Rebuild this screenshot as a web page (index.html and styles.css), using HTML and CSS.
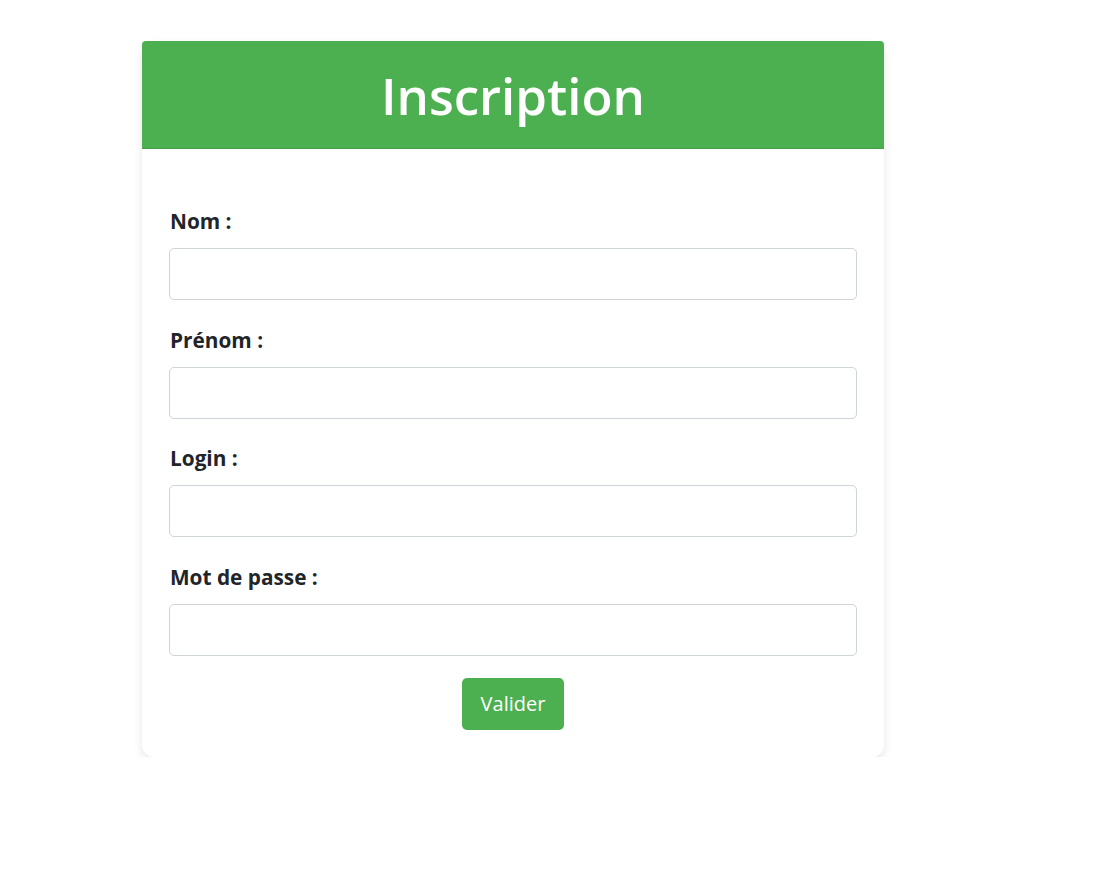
FILE: index.html
```html
<!DOCTYPE html>
<html lang="fr">
<head>
<meta charset="utf-8">
<title>Inscription</title>
<link rel="stylesheet" href="styles.css">
</head>
<body>
<div class="page">
  <div class="card">
    <div class="card-header">
      <h1 class="title">Inscription</h1>
    </div>
    <form class="card-body">
      <div class="field">
        <label class="label" for="nom">Nom :</label>
        <input class="input" id="nom" type="text">
      </div>
      <div class="field">
        <label class="label" for="prenom">Prénom :</label>
        <input class="input" id="prenom" type="text">
      </div>
      <div class="field">
        <label class="label" for="login">Login :</label>
        <input class="input" id="login" type="text">
      </div>
      <div class="field field-last">
        <label class="label" for="mdp">Mot de passe :</label>
        <input class="input" id="mdp" type="password">
      </div>
      <div class="actions">
        <button class="btn" type="submit">Valider</button>
      </div>
    </form>
  </div>
</div>
</body>
</html>
```
FILE: styles.css
```css
* { box-sizing: border-box; }
html, body { margin: 0; padding: 0; background: #fff; }
body {
  font-family: "Open Sans", "Noto Sans", sans-serif;
  color: #212529;
}
.page {
  padding: 41px 0 0 142px;
}
.card {
  width: 742px;
  background: #fff;
  border-radius: 12px;
  box-shadow: 0 4px 10px rgba(0, 0, 0, 0.1);
}
.card-header {
  background: #4caf50;
  border-bottom: 1px solid #43a047;
  border-radius: 4px 4px 0 0;
  height: 108px;
  display: flex;
  align-items: center;
  justify-content: center;
}
.title {
  margin: 0;
  color: #fff;
  font-size: 51px;
  font-weight: 600;
  line-height: 1.2;
  padding-top: 2px;
}
.card-body {
  padding: 57px 27px 27px;
  display: flex;
  flex-direction: column;
}
.field {
  display: flex;
  flex-direction: column;
  margin-bottom: 24.5px;
}
.field-last { margin-bottom: 22px; }
.label {
  font-size: 20.8px;
  font-weight: 700;
  line-height: 30px;
  padding-left: 1px;
  margin-bottom: 12px;
}
.input {
  height: 52px;
  width: 100%;
  border: 1px solid #ced4da;
  border-radius: 5px;
  padding: 6px 12px;
  font: inherit;
  font-size: 20px;
  background: #fff;
}
.actions {
  display: flex;
  justify-content: center;
}
.btn {
  height: 52px;
  width: 102px;
  background: #4caf50;
  color: #fff;
  border: none;
  border-radius: 5px;
  font-family: inherit;
  font-size: 20px;
  padding: 0;
}
```
